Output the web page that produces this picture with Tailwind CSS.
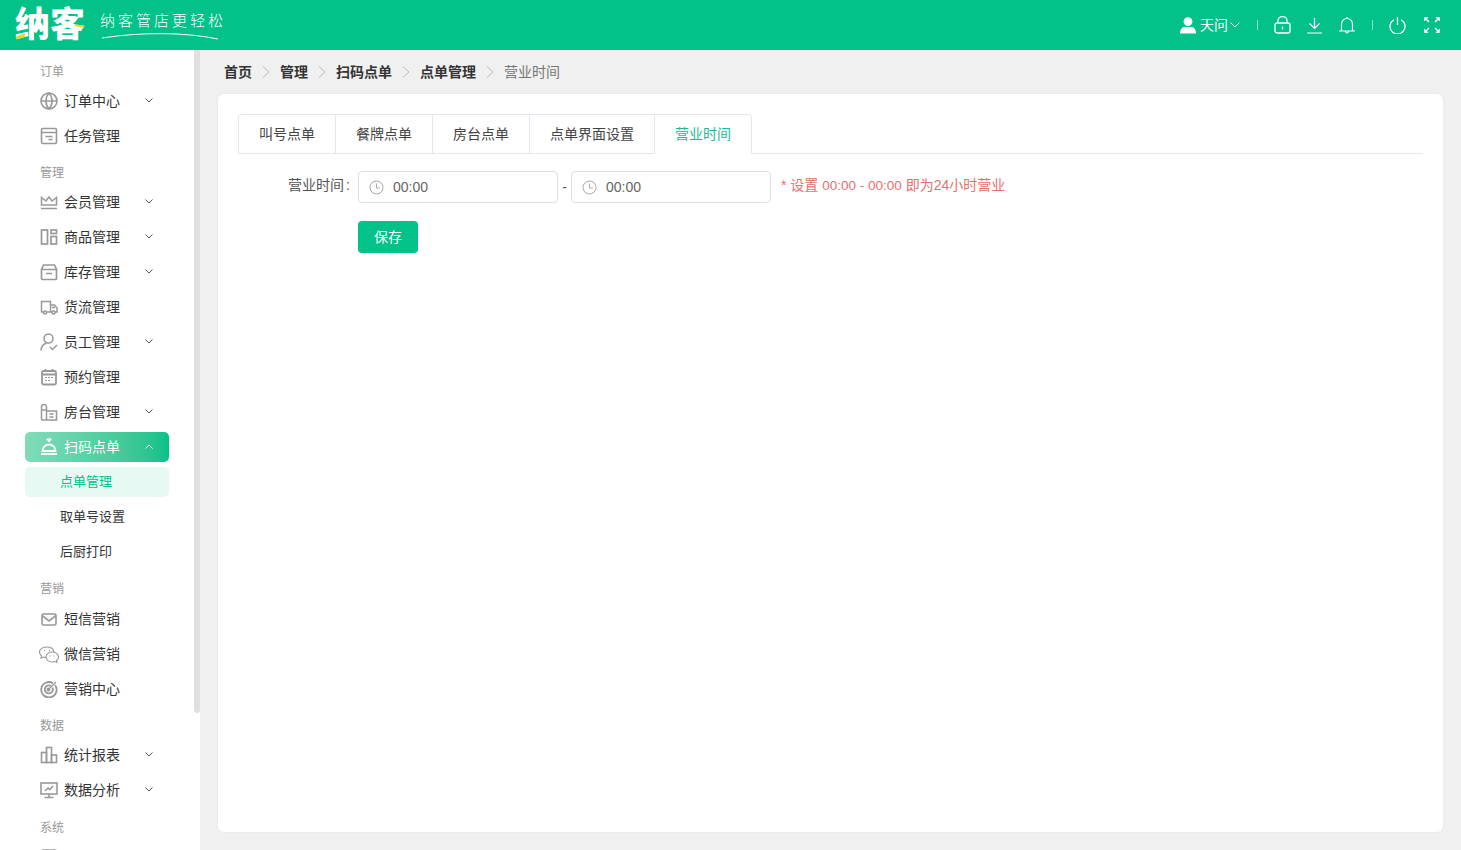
<!DOCTYPE html>
<html lang="zh-CN">
  <head>
    <meta charset="UTF-8" />
    <meta name="viewport" content="width=device-width, initial-scale=1.0" />
    <title>营业时间</title>
    <script src="https://cdn.jsdelivr.net/npm/@tailwindcss/browser@4"></script>
  </head>
  <body class="h-[850px] overflow-hidden bg-[#f0f0f0] font-['Liberation_Sans','Noto_Sans_CJK_SC',sans-serif] text-sm text-[#333]">
    <!-- header -->
    <header class="flex h-[50px] items-center justify-between bg-[#02c189] text-white">
      <div class="flex items-center">
        <div class="relative ml-[15px] w-[72px] text-[35px] leading-[50px] font-black tracking-[0px]">
          纳客
          <svg class="absolute left-0 top-[22px]" width="72" height="20" fill="none">
            <path d="M1 16l9-3" stroke="#e8d62c" stroke-width="3" />
            <path d="M60 3l9 2" stroke="#e8d62c" stroke-width="2" />
          </svg>
        </div>
        <div class="relative ml-[13px] w-[126px]">
          <div class="mb-[8px] text-[15px] leading-[18px] font-light tracking-[3px]">纳客管店更轻松</div>
          <svg class="absolute left-0 top-[14px]" width="126" height="14" fill="none">
            <path d="M2 12C40 6 85 6 118 13" stroke="#fff" stroke-width="1" />
          </svg>
        </div>
      </div>
      <div class="mr-[21px] flex items-center">
        <svg class="mr-[4px]" width="16" height="17" viewBox="0 0 16 17" fill="#fff"><circle cx="8" cy="4.600" r="4.400" /><path d="M0 16.500c0-4.500 2.500-6.500 4.500-6.500h7c2 0 4.500 2 4.500 6.500z" /></svg>
        <span class="text-sm">天问</span>
        <svg class="ml-[2px]" width="10" height="6" fill="none" stroke="#fff"><path d="M.5.500 5 5 9.500.500" /></svg>
        <span class="ml-[17px] mr-[16px] h-[10px] w-px bg-white/60"></span>
        <svg width="17" height="18" viewBox="0 0 17 18" fill="none" stroke="#fff" stroke-width="1.300"><rect x="1" y="7" width="15" height="10" rx="2" /><path d="M4 7V4.500a4.500 4 0 0 1 9 0V7M8.500 10.500v3" /></svg>
        <svg class="ml-[15px]" width="17" height="17" viewBox="0 0 17 17" fill="none" stroke="#fff" stroke-width="1.200"><path d="M8.500 1v10M3.500 6.500l5 5 5-5M1 16h15" /></svg>
        <svg class="ml-[15px]" width="18" height="18" viewBox="0 0 18 18" fill="none" stroke="#fff" stroke-width="1.200"><path d="M1 15h16M3.500 15V8a5.500 5.500 0 0 1 11 0v7M9 1v1.500M7.500 15.500a1.500 1.500 0 0 0 3 0" /></svg>
        <span class="mx-[16px] h-[10px] w-px bg-white/60"></span>
        <svg class="mr-[18px]" width="17" height="17" viewBox="0 0 17 17" fill="none" stroke="#fff" stroke-width="1.300"><path d="M5 2.800a7.500 7.500 0 1 0 7 0M8.500 0v8" /></svg>
        <svg width="16" height="16" viewBox="0 0 16 16" fill="#fff" stroke="#fff"><path d="M.5.500h3.500L.5 4zM15.500.500H12l3.500 3.500zM.5 15.500H4L.5 12zM15.500 15.500H12l3.500-3.500z" stroke-width=".6" /><path d="M2 2l3 3M14 2l-3 3M2 14l3-3M14 14l-3-3" stroke-width="1.400" /></svg>
      </div>
    </header>

    <div class="flex h-[800px]">
      <!-- sidebar -->
      <aside class="flex h-full w-[200px] shrink-0 overflow-hidden bg-white">
        <nav class="w-[194px] shrink-0 pt-[2px]">
          <div class="flex h-[31px] items-end pb-px pl-[40px] text-xs leading-[20px] text-[#999]">订单</div>
          <a class="flex h-[35px] items-center pl-[40px] pr-[41px]">
            <svg class="mr-[6px] shrink-0" width="18" height="18" viewBox="0 0 18 18" fill="none" stroke="#999" stroke-width="1.600"><circle cx="9" cy="9" r="8" /><path d="M1 9h16M9 1c-4 4-4 12 0 16M9 1c4 4 4 12 0 16" /></svg>
            <span class="flex-1">订单中心</span>
            <svg width="8" height="5" fill="none" stroke="#555"><path d="M.5.500 4 4 7.500.500" /></svg>
          </a>
          <a class="flex h-[35px] items-center pl-[40px] pr-[41px]">
            <svg class="mr-[6px] shrink-0" width="18" height="18" viewBox="0 0 18 18" fill="none" stroke="#999" stroke-width="1.600"><rect x="1.500" y="1.500" width="15" height="15" rx="1.500" /><path d="M1.500 5.500h15M5.500 9.500h7M8.500 12.500h4" /></svg>
            <span class="flex-1">任务管理</span>
          </a>

          <div class="flex h-[31px] items-end pb-px pl-[40px] text-xs leading-[20px] text-[#999]">管理</div>
          <a class="flex h-[35px] items-center pl-[40px] pr-[41px]">
            <svg class="mr-[6px] shrink-0" width="18" height="18" viewBox="0 0 18 18" fill="none" stroke="#999" stroke-width="1.500"><path d="M1.500 12V4.500L6 8l3-4 3 4 4.500-3.500V12zM1 15.500h16" /></svg>
            <span class="flex-1">会员管理</span>
            <svg width="8" height="5" fill="none" stroke="#555"><path d="M.5.500 4 4 7.500.500" /></svg>
          </a>
          <a class="flex h-[35px] items-center pl-[40px] pr-[41px]">
            <svg class="mr-[6px] shrink-0" width="18" height="18" viewBox="0 0 18 18" fill="none" stroke="#999" stroke-width="1.700"><rect x="1.500" y="2" width="6" height="14" /><rect x="11" y="2" width="5.500" height="3.500" /><rect x="11" y="8.500" width="5.500" height="7.500" /></svg>
            <span class="flex-1">商品管理</span>
            <svg width="8" height="5" fill="none" stroke="#555"><path d="M.5.500 4 4 7.500.500" /></svg>
          </a>
          <a class="flex h-[35px] items-center pl-[40px] pr-[41px]">
            <svg class="mr-[6px] shrink-0" width="18" height="18" viewBox="0 0 18 18" fill="none" stroke="#999" stroke-width="1.700"><path d="M1.500 6.500 3.500 2h11l2 4.500v9a1 1 0 0 1-1 1h-13a1 1 0 0 1-1-1zM1.500 6.500h15M6 10.500h6" /></svg>
            <span class="flex-1">库存管理</span>
            <svg width="8" height="5" fill="none" stroke="#555"><path d="M.5.500 4 4 7.500.500" /></svg>
          </a>
          <a class="flex h-[35px] items-center pl-[40px] pr-[41px]">
            <svg class="mr-[6px] shrink-0" width="18" height="18" viewBox="0 0 18 18" fill="none" stroke="#999" stroke-width="1.500"><path d="M3 14H1.500V3.500h9V14H7M10.500 7h4l2.500 3v4h-2M10.500 14H12M12 9.500h3" /><circle cx="5" cy="14.500" r="1.500" /><circle cx="13.500" cy="14.500" r="1.500" /></svg>
            <span class="flex-1">货流管理</span>
          </a>
          <a class="flex h-[35px] items-center pl-[40px] pr-[41px]">
            <svg class="mr-[6px] shrink-0" width="18" height="18" viewBox="0 0 18 18" fill="none" stroke="#999" stroke-width="1.500"><circle cx="8.500" cy="5.500" r="4.500" /><path d="M1 17.500c.3-4 2.500-6.500 5.500-7.500M10 14l2.500 2.500 4.500-4.500" /></svg>
            <span class="flex-1">员工管理</span>
            <svg width="8" height="5" fill="none" stroke="#555"><path d="M.5.500 4 4 7.500.500" /></svg>
          </a>
          <a class="flex h-[35px] items-center pl-[40px] pr-[41px]">
            <svg class="mr-[6px] shrink-0" width="18" height="18" viewBox="0 0 18 18" fill="none" stroke="#999" stroke-width="1.800"><rect x="2" y="3" width="14" height="13.500" rx="1.500" /><path d="M2 6.500h14M5.500 1v3M12.500 1v3" /><path d="M5 9.500h2M8 9.500h2M11 9.500h2M5 12.500h2M8 12.500h2" stroke-width="1" /></svg>
            <span class="flex-1">预约管理</span>
          </a>
          <a class="flex h-[35px] items-center pl-[40px] pr-[41px]">
            <svg class="mr-[6px] shrink-0" width="18" height="18" viewBox="0 0 18 18" fill="none" stroke="#999" stroke-width="1.500"><path d="M1.500 17V4a2.500 2.500 0 0 1 5 0v13M1.500 17h15V8h-10M1.500 7h5M9.500 11h4M9.500 14h4" /></svg>
            <span class="flex-1">房台管理</span>
            <svg width="8" height="5" fill="none" stroke="#555"><path d="M.5.500 4 4 7.500.500" /></svg>
          </a>
          <div class="flex h-[35px] items-center pl-[25px] pr-[25px]">
            <a class="flex h-[30px] w-full items-center rounded-[5px] bg-gradient-to-r from-[#80dcba] to-[#02c189] pl-[15px] pr-[16px] text-white">
              <svg class="mr-[6px] shrink-0" width="18" height="18" viewBox="0 0 18 18" fill="none" stroke="#fff" stroke-width="1.800"><path d="M6.500 1.500h5M9 1.500V4M2.500 13a6.500 6.500 0 0 1 13 0zM1 16h16" /></svg>
              <span class="flex-1">扫码点单</span>
              <svg width="8" height="5" fill="none" stroke="#fff"><path d="M.5 4.500 4 1l3.500 3.500" /></svg>
            </a>
          </div>
          <div class="flex h-[35px] items-center pl-[25px] pr-[25px]">
            <a class="flex h-[30px] w-full items-center rounded-[5px] bg-[#e6f9f3] pl-[35px] pt-[2px] text-[13px] text-[#02c189]">点单管理</a>
          </div>
          <a class="flex h-[35px] items-center pl-[60px] pt-[2px] text-[13px]">取单号设置</a>
          <a class="flex h-[35px] items-center pl-[60px] pt-[2px] text-[13px]">后厨打印</a>

          <div class="flex h-[32px] items-end pb-[2px] pl-[40px] text-xs leading-[20px] text-[#999]">营销</div>
          <a class="flex h-[35px] items-center pl-[40px] pr-[41px]">
            <svg class="mr-[6px] shrink-0" width="18" height="18" viewBox="0 0 18 18" fill="none" stroke="#999" stroke-width="1.600"><rect x="2" y="4" width="14" height="11" rx="1.500" /><path d="M2 5.500 9 11l7-5.500" /></svg>
            <span class="flex-1">短信营销</span>
          </a>
          <a class="flex h-[35px] items-center pl-[39px] pr-[41px]">
            <svg class="mr-[5px] shrink-0" width="20" height="18" viewBox="0 0 20 18" fill="none" stroke="#999" stroke-width="1.100"><path d="M8 2C4 2 .5 4 .5 7c0 1.700 1 3 2 4l-.5 2 2.500-1c.8.300 1.500.400 2.500.400M15 7c-.5-3-3.500-5-7-5" /><path d="M13 7c-3 0-6 2-6 5s3 5 6 5c1 0 1.500 0 2.500-.400L18 17.500l-.5-2c1.500-1 2-2 2-3.500 0-3-3-5-6.500-5z" /><path d="M10.500 11h1M14.500 11h1M5 5.500h1M10 5.500h1" /></svg>
            <span class="flex-1">微信营销</span>
          </a>
          <a class="flex h-[35px] items-center pl-[40px] pr-[41px]">
            <svg class="mr-[6px] shrink-0" width="18" height="18" viewBox="0 0 18 18" fill="none" stroke="#999" stroke-width="1.800"><path d="M13 3.200A7.700 7.700 0 1 0 15 5" /><path d="M11 6a4 4 0 1 0 1.500 1.700" /><circle cx="8.500" cy="9.500" r="1" /><path d="M8.500 9.500 16 2" stroke-width="1.200" /></svg>
            <span class="flex-1">营销中心</span>
          </a>

          <div class="flex h-[31px] items-end pb-px pl-[40px] text-xs leading-[20px] text-[#999]">数据</div>
          <a class="flex h-[35px] items-center pl-[40px] pr-[41px]">
            <svg class="mr-[6px] shrink-0" width="18" height="18" viewBox="0 0 18 18" fill="none" stroke="#999" stroke-width="1.600"><rect x="1.500" y="6.500" width="5" height="10" /><rect x="6.500" y="1.500" width="5" height="15" /><rect x="11.500" y="9" width="5" height="7.500" /></svg>
            <span class="flex-1">统计报表</span>
            <svg width="8" height="5" fill="none" stroke="#555"><path d="M.5.500 4 4 7.500.500" /></svg>
          </a>
          <a class="flex h-[35px] items-center pl-[40px] pr-[41px]">
            <svg class="mr-[6px] shrink-0" width="18" height="18" viewBox="0 0 18 18" fill="none" stroke="#999" stroke-width="1.600"><rect x="1" y="2" width="16" height="11" /><path d="M9 13v3.500M4.500 16.500h9M5 10l3-3 2 1.500L13 5" /></svg>
            <span class="flex-1">数据分析</span>
            <svg width="8" height="5" fill="none" stroke="#555"><path d="M.5.500 4 4 7.500.500" /></svg>
          </a>

          <div class="flex h-[32px] items-end pb-px pl-[40px] text-xs leading-[20px] text-[#999]">系统</div>
          <div class="flex h-[35px] items-center pl-[40px]">
            <svg class="shrink-0" width="18" height="18" viewBox="0 0 18 18" fill="none" stroke="#999" stroke-width="1.600"><rect x="1.500" y="2" width="15" height="14" rx="2" /><path d="M6 2v4M12 2v4" /></svg>
          </div>
        </nav>
        <div class="h-[663px] w-[6px] shrink-0 rounded-b-[3px] bg-[#e0e0e0]"></div>
      </aside>

      <!-- main -->
      <main class="min-w-0 flex-1 pl-[18px] pr-[18px]">
        <div class="flex h-[44px] items-center pl-[6px]">
          <span class="font-bold">首页</span>
          <svg class="mx-[10px]" width="8" height="12" fill="none" stroke="#bbb"><path d="M1 .5 7 6l-6 5.500" /></svg>
          <span class="font-bold">管理</span>
          <svg class="mx-[10px]" width="8" height="12" fill="none" stroke="#bbb"><path d="M1 .5 7 6l-6 5.500" /></svg>
          <span class="font-bold">扫码点单</span>
          <svg class="mx-[10px]" width="8" height="12" fill="none" stroke="#bbb"><path d="M1 .5 7 6l-6 5.500" /></svg>
          <span class="font-bold">点单管理</span>
          <svg class="mx-[10px]" width="8" height="12" fill="none" stroke="#bbb"><path d="M1 .5 7 6l-6 5.500" /></svg>
          <span class="text-[#777]">营业时间</span>
        </div>

        <section class="h-[738px] rounded-[6px] bg-white px-[20px] pt-[20px] shadow-[0_0_3px_rgba(0,0,0,0.05)]">
          <div class="flex h-[40px] border-b border-[#e4e7ed] text-sm text-[#444]">
            <div class="flex h-[40px] w-[97px] items-center justify-center rounded-tl-[4px] border-y border-l border-[#e4e7ed]">叫号点单</div>
            <div class="flex h-[40px] w-[97px] items-center justify-center border-y border-l border-[#e4e7ed]">餐牌点单</div>
            <div class="flex h-[40px] w-[97px] items-center justify-center border-y border-l border-[#e4e7ed]">房台点单</div>
            <div class="flex h-[40px] w-[125px] items-center justify-center border-y border-l border-[#e4e7ed]">点单界面设置</div>
            <div class="flex h-[40px] w-[98px] items-center justify-center rounded-tr-[4px] border-x border-t border-b border-[#e4e7ed] border-b-white text-[#1abc9c]">营业时间</div>
          </div>

          <div class="mt-[17px] flex h-[32px] items-center">
            <label class="w-[112px] pb-[4px] text-right text-[#555]">营业时间<span class="ml-[2px]">:</span></label>
            <div class="ml-[8px] flex h-[32px] w-[200px] items-center rounded-[4px] border border-[#dcdfe6] pl-[10px] text-[#666]">
              <svg class="mr-[9px]" width="15" height="15" fill="none" stroke="#aaa"><circle cx="7.500" cy="7.500" r="6.500" /><path d="M7.500 3.500v4.500H11" /></svg>
              00:00
            </div>
            <span class="w-[13px] text-center text-[#555]">-</span>
            <div class="flex h-[32px] w-[200px] items-center rounded-[4px] border border-[#dcdfe6] pl-[10px] text-[#666]">
              <svg class="mr-[9px]" width="15" height="15" fill="none" stroke="#aaa"><circle cx="7.500" cy="7.500" r="6.500" /><path d="M7.500 3.500v4.500H11" /></svg>
              00:00
            </div>
            <span class="ml-[10px] pb-[4px] text-[#e66f6f]">* 设置 <span class="text-[13.5px]">00:00 - 00:00</span> 即为24小时营业</span>
          </div>

          <button class="ml-[120px] mt-[18px] h-[32px] w-[60px] rounded-[4px] bg-[#02c189] text-[14px] text-white">保存</button>
        </section>
      </main>
    </div>
  </body>
</html>
